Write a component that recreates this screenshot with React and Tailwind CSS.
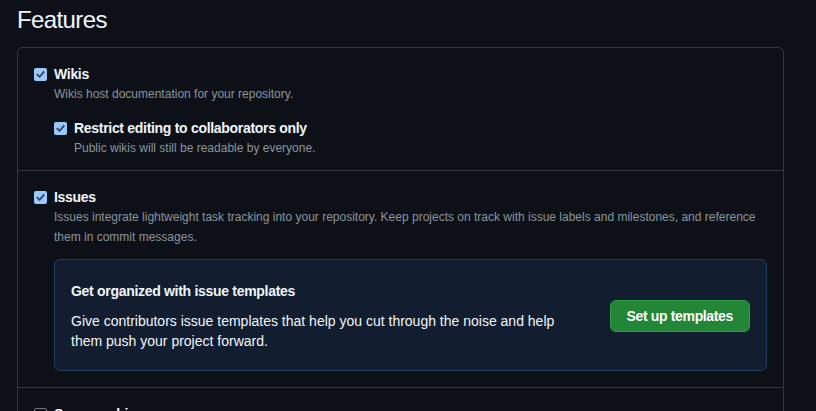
const FONT = { fontFamily: '"Liberation Sans", Arial, sans-serif' };

function Check({ checked = true }) {
    if (!checked) {
        return (
            <span className="mt-[4px] block w-[13px] h-[13px] shrink-0 rounded-[2px] border border-[#6e7681] bg-[#0d1117]" />
        );
    }
    return (
        <span className="mt-[4px] flex w-[13px] h-[13px] shrink-0 items-center justify-center rounded-[2px] bg-[#99c8ff]">
            <svg width="9" height="9" viewBox="0 0 10 10" fill="none">
                <path d="M1.5 5.2 L4 7.6 L8.6 2.2" stroke="#3b3b3b" strokeWidth="1.8" strokeLinecap="square" />
            </svg>
        </span>
    );
}

function Option({ label, desc, checked = true, children }) {
    return (
        <div className="flex gap-[7px]">
            <Check checked={checked} />
            <div className="flex-1">
                <p className="text-[14px] leading-5 font-bold tracking-[-0.3px] text-[#f0f6fc]">{label}</p>
                {desc && <p className="text-[12px] leading-5 text-[#8b949e]">{desc}</p>}
                {children}
            </div>
        </div>
    );
}

export default function App() {
    return (
        <div className="min-h-[411px] bg-[#0d1117] overflow-hidden" style={FONT}>
            {/* Header */}
            <h1 className="pl-[17px] pt-[2px] h-[38px] text-[24px] leading-9 font-normal tracking-[-0.6px] text-[#f0f6fc]">
                Features
            </h1>

            <div className="mt-[9px] ml-[17px] w-[767px] rounded-t-md border border-[#30363d] border-b-0">
                {/* Wikis */}
                <section className="px-4 pt-4 pb-3 border-b border-[#30363d]">
                    <Option label="Wikis" desc="Wikis host documentation for your repository.">
                        <div className="mt-[14px]">
                            <Option
                                label="Restrict editing to collaborators only"
                                desc="Public wikis will still be readable by everyone."
                            />
                        </div>
                    </Option>
                </section>

                {/* Issues */}
                <section className="px-4 pt-4 pb-4 border-b border-[#30363d]">
                    <Option
                        label="Issues"
                        desc="Issues integrate lightweight task tracking into your repository. Keep projects on track with issue labels and milestones, and reference them in commit messages."
                    >
                        <div className="mt-3 flex items-center justify-between rounded-md border border-[#1f3d64] bg-[#121d2f] px-4 pt-[21px] pb-[19px]">
                            <div>
                                <p className="text-[14px] leading-5 font-bold tracking-[-0.3px] text-[#f0f6fc]">
                                    Get organized with issue templates
                                </p>
                                <p className="mt-2.5 w-[500px] text-[14px] leading-5 text-[#f0f6fc]">
                                    Give contributors issue templates that help you cut through the noise and help them push your project forward.
                                </p>
                            </div>
                            <button className="h-8 px-4 rounded-md border border-[#2f9a44] bg-[#238636] text-[14px] font-bold tracking-[-0.35px] text-white">
                                Set up templates
                            </button>
                        </div>
                    </Option>
                </section>

                {/* Sponsorships */}
                <section className="px-4 pt-4 pb-4">
                    <Option label="Sponsorships" checked={false} desc="Sponsorships help your community know how to financially support this repository." />
                </section>
            </div>
        </div>
    );
}
